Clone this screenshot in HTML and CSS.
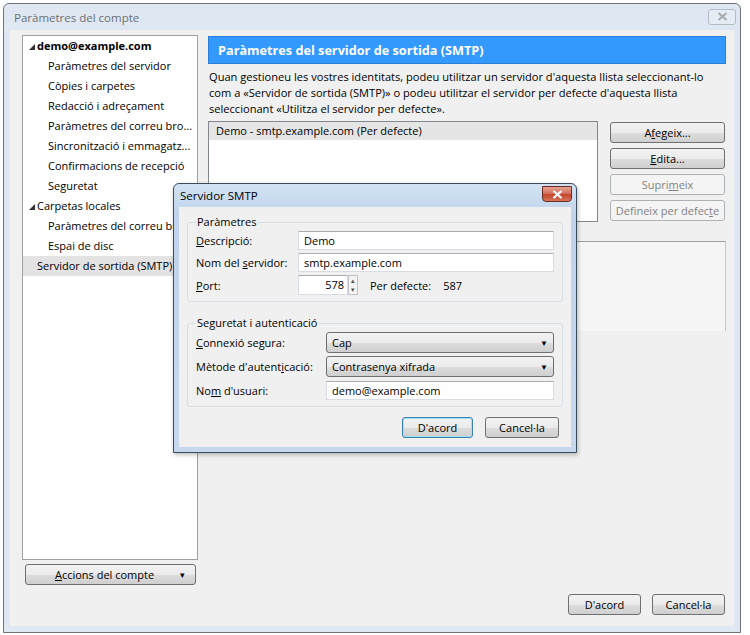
FILE: index.html
```html
<!doctype html>
<html>
<head>
<meta charset="utf-8">
<title>Paràmetres del compte</title>
<link rel="stylesheet" href="styles.css">
</head>
<body>
<div class="window">
	<div class="titlebar">
		<span class="title">Paràmetres del compte</span>
		<span class="close-off"><svg width="11" height="9" viewBox="0 0 11 9"><path d="M1.5 1 L9.5 8 M9.5 1 L1.5 8" stroke="#a9adb3" stroke-width="2.2" fill="none"/></svg></span>
	</div>
	<div class="content">
		<div class="left">
			<ul class="tree">
				<li class="top bold"><svg class="twisty" width="6" height="6" viewBox="0 0 6 6"><path d="M6 0 V6 H0 Z" fill="#333"/></svg>demo@example.com</li>
				<li class="sub">Paràmetres del servidor</li>
				<li class="sub">Còpies i carpetes</li>
				<li class="sub">Redacció i adreçament</li>
				<li class="sub">Paràmetres del correu bro...</li>
				<li class="sub">Sincronització i emmagatz...</li>
				<li class="sub">Confirmacions de recepció</li>
				<li class="sub">Seguretat</li>
				<li class="top"><svg class="twisty" width="6" height="6" viewBox="0 0 6 6"><path d="M6 0 V6 H0 Z" fill="#333"/></svg>Carpetas locales</li>
				<li class="sub">Paràmetres del correu bro...</li>
				<li class="sub">Espai de disc</li>
				<li class="top sel">Servidor de sortida (SMTP)</li>
			</ul>
			<button class="btn accions"><span><u>A</u>ccions del compte</span><span class="drop">▾</span></button>
		</div>
		<div class="main">
			<div class="header">Paràmetres del servidor de sortida (SMTP)</div>
			<p class="desc">Quan gestioneu les vostres identitats, podeu utilitzar un servidor d'aquesta llista seleccionant-lo<br>com a «Servidor de sortida (SMTP)» o podeu utilitzar el servidor per defecte d'aquesta llista<br>seleccionant «Utilitza el servidor per defecte».</p>
			<div class="servers">
				<div class="list">
					<div class="row">Demo - smtp.example.com (Per defecte)</div>
				</div>
				<div class="side">
					<button class="btn">A<u>f</u>egeix...</button>
					<button class="btn"><u>E</u>dita...</button>
					<button class="btn off">Supri<u>m</u>eix</button>
					<button class="btn off">Defineix per defec<u>t</u>e</button>
				</div>
			</div>
			<div class="details"></div>
			<div class="footer">
				<button class="btn wide">D'acord</button>
				<button class="btn wide">Cancel·la</button>
			</div>
		</div>
	</div>

	<div class="dialog">
		<div class="dlg-title">
			<span>Servidor SMTP</span>
			<span class="close-red"><svg width="11" height="9" viewBox="0 0 11 9"><path d="M1.5 1 L9.5 8 M9.5 1 L1.5 8" stroke="#fff" stroke-width="2.2" fill="none"/></svg></span>
		</div>
		<div class="dlg-body">
			<fieldset class="group">
				<legend>Paràmetres</legend>
				<div class="field">
					<label><u>D</u>escripció:</label>
					<div class="input">Demo</div>
				</div>
				<div class="field">
					<label>Nom del <u>s</u>ervidor:</label>
					<div class="input">smtp.example.com</div>
				</div>
				<div class="field tall">
					<label><u>P</u>ort:</label>
					<div class="port">
						<div class="input num">578</div>
						<div class="spin"><span>▴</span><span>▾</span></div>
					</div>
					<span class="default">Per defecte:</span>
					<span>587</span>
				</div>
			</fieldset>
			<fieldset class="group sec">
				<legend>Seguretat i autenticació</legend>
				<div class="field">
					<label><u>C</u>onnexió segura:</label>
					<div class="select"><span>Cap</span><span class="caret">▼</span></div>
				</div>
				<div class="field">
					<label>Mètode d'autent<u>i</u>cació:</label>
					<div class="select"><span>Contrasenya xifrada</span><span class="caret">▼</span></div>
				</div>
				<div class="field">
					<label>No<u>m</u> d'usuari:</label>
					<div class="input">demo@example.com</div>
				</div>
			</fieldset>
			<div class="dlg-buttons">
				<button class="btn focus">D'acord</button>
				<button class="btn">Cancel·la</button>
			</div>
		</div>
	</div>
</div>
</body>
</html>
```

FILE: styles.css
```css
*{margin:0;padding:0;box-sizing:border-box}
body{background:#fff;font-family:"Open Sans","Noto Sans",sans-serif;font-size:11px;color:#000}
u{text-decoration:underline;text-underline-offset:1px}

.window{position:relative;margin:3px 0 0 3px;width:738px;height:630px;border:1px solid #6f7378;border-radius:6px 6px 0 0;background:#dfe8f2;display:flex;flex-direction:column}
.titlebar{height:26px;display:flex;align-items:center;justify-content:space-between;padding:0 4px 0 10px}
.titlebar .title{color:#6b6f75;font-size:11.5px}
.close-off{width:28px;height:16px;border:1px solid #b5bcc6;border-radius:3px;background:#e6ecf3;display:flex;align-items:center;justify-content:center;margin-top:-1px}

.content{flex:1;margin:0 6px 6px 6px;background:#f0f0f0;display:flex;padding:5px 8px 11px 12px}

.left{width:176px;display:flex;flex-direction:column}
.tree{list-style:none;background:#fff;border:1px solid #a0a0a0;height:525px}
.tree li{height:20px;line-height:20px;white-space:nowrap;overflow:hidden}
.tree .top{padding-left:14px;position:relative}
.tree .sub{padding-left:25px}
.tree .bold{font-weight:bold}
.tree .twisty{position:absolute;left:6px;top:8px}
.tree .sel{background:#e3e3e3}

.btn{font-family:inherit;font-size:11px;color:#000;height:21px;border:1px solid #707070;border-radius:3px;background:linear-gradient(#f2f2f2 0%,#ebebeb 50%,#dddddd 51%,#cfcfcf 100%);display:flex;align-items:center;justify-content:center}
.btn.off{border-color:#adb2b5;background:#f4f4f4;color:#838383}
.accions{margin:4px 2px 0 3px;width:171px;padding:0 12px 0 0;position:relative}
.accions .drop{position:absolute;right:10px;font-size:9px;top:3px}

.main{flex:1;margin-left:10px;display:flex;flex-direction:column}
.header{margin-top:1px;height:28px;background:#3399fd;border:1px solid #2b7fd6;color:#fff;font-weight:bold;font-size:12.7px;line-height:26px;padding-left:9px}
.desc{margin-top:5px;line-height:16px;white-space:nowrap;padding-left:1px;font-size:11.1px}
.servers{display:flex;margin-top:4px}
.list{width:390px;height:101px;background:#fff;border:1px solid #828790}
.list .row{height:18px;line-height:18px;background:#e5e5e5;padding-left:7px}
.side{margin-left:12px;width:115px;display:flex;flex-direction:column;gap:5px;margin-top:1px}
.details{margin-top:19px;margin-left:-8px;height:90px;border-top:1px solid #a0a0a0;border-right:1px solid #c8c8c8;background:#f5f5f5}
.footer{margin-top:auto;display:flex;justify-content:flex-end;gap:11px;padding-right:1px}
.footer .wide{width:73px}

.dialog{position:absolute;left:169px;top:179px;width:404px;height:270px;border:1px solid #3c4a5a;border-radius:6px 6px 0 0;background:linear-gradient(#d3e2f3,#bfd4ec 30px,#c5d8ee);display:flex;flex-direction:column;box-shadow:1px 2px 4px rgba(0,0,0,.25)}
.dlg-title{height:23px;display:flex;align-items:center;justify-content:space-between;padding:0 4px 0 6px;font-size:11.5px}
.close-red{width:30px;height:16px;border:1px solid #6b2b22;border-radius:0 0 4px 4px;background:linear-gradient(#e8a493,#d2735f 45%,#c4462d 55%,#d8765d);display:flex;align-items:center;justify-content:center;margin-top:-3px}
.dlg-body{flex:1;margin:0 5px 5px 5px;background:#f0f0f0;padding:8px 8px 0 8px;display:flex;flex-direction:column}

.group{border:1px solid #d5dfe5;border-radius:3px;padding:0 8px 4px 8px}
.group legend{padding:0 1px;line-height:14px}
.group.sec{margin-top:14px}
.field{display:flex;align-items:center;height:22px}
.field.tall{height:24px}
.field label{width:102px}
.sec .field{height:24px}
.sec .field label{width:130px}
.input{flex:1;height:19px;background:#fff;border:1px solid #d9dde3;border-top-color:#abadb3;padding:0 5px;line-height:17px}
.port{display:flex;width:60px;flex:none}
.input.num{width:50px;flex:none;text-align:right;padding-right:3px;height:20px}
.spin{width:10px;height:20px;display:flex;flex-direction:column;border:1px solid #c0c4ca;background:#f4f4f4;font-size:7px;line-height:9px;color:#555;text-align:center}
.spin span{flex:1}
.default{margin:0 12px}
.select{flex:1;height:21px;border:1px solid #707070;border-radius:3px;background:linear-gradient(#f2f2f2 0%,#ebebeb 50%,#dddddd 51%,#cfcfcf 100%);display:flex;align-items:center;justify-content:space-between;padding:0 5px}
.select .caret{font-size:8px}
.dlg-buttons{display:flex;justify-content:flex-end;gap:12px;margin-top:10px;padding-right:4px}
.dlg-buttons .btn{width:71px}
.dlg-buttons .btn+.btn{width:74px}
.btn.focus{border-color:#3c7fb1;box-shadow:inset 0 0 0 1px #9fe3f8}
```
